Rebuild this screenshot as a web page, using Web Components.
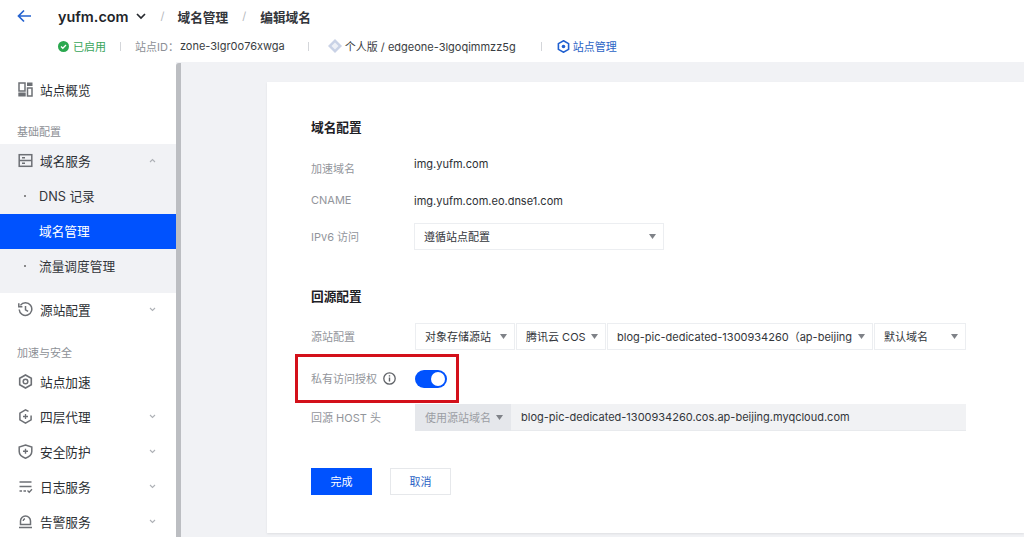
<!DOCTYPE html>
<html lang="zh">
<head>
<meta charset="utf-8">
<title>编辑域名</title>
<style>
html, body { margin: 0; height: 537px; overflow: hidden; background: #f1f2f5; }
body { font: 11px Inter, "Noto Sans CJK SC", sans-serif; color: #24272c; }
</style>
</head>
<body>

<eo-page>
	<eo-header slot="header"></eo-header>
	<eo-sidebar slot="side"></eo-sidebar>
	<eo-card slot="main">
		<eo-title>域名配置</eo-title>
		<eo-row label="加速域名" gap="12" labelshift="5" h="26">img.yufm.com</eo-row>
		<eo-row label="CNAME" gap="12" h="26">img.yufm.com.eo.dnse1.com</eo-row>
		<eo-row label="IPv6 访问" gap="9" h="27">
			<eo-select w="250">遵循站点配置</eo-select>
		</eo-row>
		<eo-title gap="37">回源配置</eo-title>
		<eo-row label="源站配置" gap="16" h="27">
			<eo-select w="100" style="margin-left:1px">对象存储源站</eo-select>
			<eo-select w="90" style="margin-left:1px">腾讯云 COS</eo-select>
			<eo-select w="266" clip style="margin-left:1px">blog-pic-dedicated-1300934260（ap-beijing）</eo-select>
			<eo-select w="92" style="margin-left:1px">默认域名</eo-select>
		</eo-row>
		<eo-row label="私有访问授权" info gap="16" h="26">
			<eo-toggle style="margin-left:1px"></eo-toggle>
		</eo-row>
		<eo-row label="回源 HOST 头" gap="12" h="27">
			<eo-select w="96" disabled style="margin-left:1px">使用源站域名</eo-select>
			<eo-input w="455">blog-pic-dedicated-1300934260.cos.ap-beijing.myqcloud.com</eo-input>
		</eo-row>
		<eo-actions>
			<eo-button primary>完成</eo-button>
			<eo-button>取消</eo-button>
		</eo-actions>
		<eo-mark></eo-mark>
	</eo-card>
</eo-page>

<script>
const FONT = `Inter, "Noto Sans CJK SC", sans-serif`

const ICONS = {
	overview: `<rect x="1" y="1" width="6" height="8" fill="none" stroke="currentColor" stroke-width="1.5"/><rect x="9" y=".5" width="5.500" height="3.500" fill="currentColor"/><rect x=".3" y="10.500" width="7.400" height="4" fill="currentColor"/><rect x="9.500" y="6" width="4.500" height="8" fill="none" stroke="currentColor" stroke-width="1.500"/>`,
	domain: `<rect x="1.200" y="1.700" width="12.600" height="11.600" fill="none" stroke="currentColor" stroke-width="1.500"/><path d="M1.200 7.500h12.600M4 4.700h3M4 10.300h3" fill="none" stroke="currentColor" stroke-width="1.500"/>`,
	origin: `<path d="M2.400 3.400A6.300 6.300 0 1 1 1.200 7.500" fill="none" stroke="currentColor" stroke-width="1.500"/><path d="M.8 1.200v3.500h3.600" fill="none" stroke="currentColor" stroke-width="1.500"/><path d="M7.500 4v3.800l2.600 1.600" fill="none" stroke="currentColor" stroke-width="1.500"/>`,
	speed: `<path d="M7.500 1 13.300 4.200v6.600L7.500 14 1.700 10.800V4.200z" fill="none" stroke="currentColor" stroke-width="1.600"/><circle cx="7.500" cy="7.500" r="2.300" fill="none" stroke="currentColor" stroke-width="1.500"/>`,
	layer4: `<path d="M10.500 2.400 7.500 .9 1.900 4.100v6.800l5.600 3.200 5.600-3.200V6.500" fill="none" stroke="currentColor" stroke-width="1.500"/><path d="M7.500 5v5M5 7.500h5" stroke="currentColor" stroke-width="1.300"/>`,
	shield: `<path d="M7.500 1 13.800 3v4.600c0 3.200-2.700 5.400-6.300 6.600C3.900 13 1.200 10.800 1.200 7.600V3z" fill="none" stroke="currentColor" stroke-width="1.500"/><path d="M7.500 4.800v5M5 7.300h5" stroke="currentColor" stroke-width="1.400"/>`,
	log: `<path d="M1.500 3h12M1.500 7.500h12M1.500 12h2.500M5.500 12h2.500" fill="none" stroke="currentColor" stroke-width="1.300"/><path d="M9.500 11.500l1.700 1.700 2.800-2.900" fill="none" stroke="currentColor" stroke-width="1.300"/>`,
	alarm: `<path d="M2.500 10.500V7a5 5 0 0 1 10 0v3.500z" fill="none" stroke="currentColor" stroke-width="1.500"/><path d="M1 13.500h13M5.200 7a2.400 2.400 0 0 1 1.800-2.200" fill="none" stroke="currentColor" stroke-width="1.400"/>`
}

class EoPage extends HTMLElement {
	constructor(){
		super()
		this.attachShadow({mode: 'open'}).innerHTML = `
			<style>
				:host{ display: flex; flex-direction: column; height: 537px; background: #f1f2f5; }
				.body{ flex: 1; display: flex; min-height: 0; }
				.bar{ width: 5px; background: #bcbec2; border-radius: 3px 0 0 0; margin-top: 1px; flex: none; }
				.main{ flex: 1; min-width: 0; padding: 20px 0 4px 86px; display: flex; }
			</style>
			<slot name="header"></slot>
			<div class="body">
				<slot name="side"></slot>
				<div class="bar"></div>
				<div class="main"><slot name="main"></slot></div>
			</div>`
	}
}

class EoHeader extends HTMLElement {
	constructor(){
		super()
		this.attachShadow({mode: 'open'}).innerHTML = `
			<style>
				:host{ display: block; flex: none; height: 62px; background: #fff; font-family: ${FONT}; }
				.top{ display: flex; align-items: center; height: 32px; padding-left: 17px; }
				.name{ font-size: 14.400px; font-weight: 600; margin-left: 26px; color: #22252a; }
				.crumb{ font-size: 12.700px; font-weight: bold; color: #33363b; }
				.slash{ color: #b5b8bd; font-size: 11px; }
				.sub{ display: flex; align-items: center; height: 28px; padding: 0 0 0 58px; font-size: 11px; color: #8d9096; }
				.ok{ color: #38a55a; margin-left: 4px; }
				.sep{ width: 1px; height: 9px; background: #d4d6da; }
				.dark{ color: #3a3d42; }
				.link{ color: #2a63c5; margin-left: 3px; }
			</style>
			<div class="top">
				<svg width="15" height="14" viewBox="0 0 15 14" fill="none" stroke="#2563d0" stroke-width="1.700"><path d="M14 7H1.500M7 1.500 1.500 7 7 12.500"/></svg>
				<span class="name">yufm.com</span>
				<svg style="margin-left:7px" width="10" height="7" viewBox="0 0 10 7" fill="none" stroke="#26292e" stroke-width="1.700"><path d="M1 1l4 4 4-4"/></svg>
				<span class="slash" style="margin-left:15px">/</span>
				<span class="crumb" style="margin-left:13px">域名管理</span>
				<span class="slash" style="margin-left:14px">/</span>
				<span class="crumb" style="margin-left:14px">编辑域名</span>
			</div>
			<div class="sub">
				<svg width="11" height="11" viewBox="0 0 11 11"><circle cx="5.500" cy="5.500" r="5.500" fill="#2aa84f"/><path d="M3 5.500l1.800 1.800L8 4" fill="none" stroke="#fff" stroke-width="1.300"/></svg>
				<span class="ok">已启用</span>
				<span class="sep" style="margin-left:14px"></span>
				<span style="margin-left:14px">站点ID：</span>
				<span class="dark" style="margin-left:1px">zone-3lgr0o76xwga</span>
				<span class="sep" style="margin-left:23px"></span>
				<svg style="margin-left:19px" width="14" height="14" viewBox="0 0 14 14"><path d="M7 0 14 7 7 14 0 7z" fill="#c9d2e6"/><path d="M7 3.500 10.500 7 7 10.500 3.500 7z" fill="#eef1f7"/></svg>
				<span class="dark" style="margin-left:3px">个人版 / edgeone-3lgoqimmzz5g</span>
				<span class="sep" style="margin-left:25px"></span>
				<svg style="margin-left:15px" width="13" height="13" viewBox="0 0 13 13"><path d="M6.500 .8 11.600 3.600v5.800L6.500 12.200 1.400 9.400V3.600z" fill="none" stroke="#1f5fd0" stroke-width="1.600"/><circle cx="6.500" cy="6.500" r="1.800" fill="#1f5fd0"/></svg>
				<span class="link">站点管理</span>
			</div>`
	}
}

class NavItem extends HTMLElement {
	constructor(){
		super()
		this.attachShadow({mode: 'open'})
	}
	connectedCallback(){
		const icon = this.getAttribute('icon')
		const arrow = this.getAttribute('arrow')
		const glyph = icon
			? `<svg class="ic" width="15" height="15" viewBox="0 0 15 15">${ICONS[icon]}</svg>`
			: (this.hasAttribute('plain') ? `` : `<i class="dot"></i>`)
		const chev = arrow
			? `<svg class="chev" width="7" height="5" viewBox="0 0 7 5" fill="none" stroke="#aeb1b6" stroke-width="1.100"><path d="${arrow === 'up' ? 'M1 4l2.500-2.500L6 4' : 'M1 1l2.500 2.500L6 1'}"/></svg>`
			: ``
		this.shadowRoot.innerHTML = `
			<style>
				:host{ display: flex; align-items: center; height: 35px; box-sizing: border-box; padding: 0 0 2px 18px; font-size: 12.700px; color: #2c2f34; font-family: ${FONT}; }
				:host([sub]){ padding-left: 39px; color: #33363b; }
				:host([active]){ background: #0052fe; color: #fff; }
				.ic{ color: #6d7075; margin-right: 7px; flex: none; }
				.dot{ width: 2px; height: 2px; background: #666; border-radius: 50%; margin-left: -15px; margin-right: 13px; flex: none; }
				.chev{ margin-left: auto; margin-right: 20px; flex: none; }
			</style>
			${glyph}<slot></slot>${chev}`
	}
}

class NavGroup extends HTMLElement {
	constructor(){
		super()
		this.attachShadow({mode: 'open'}).innerHTML = `
			<style>
				:host{ display: block; font-size: 11px; color: #8d9096; padding-left: 17px; line-height: 14px; }
			</style>
			<slot></slot>`
	}
}

class EoSidebar extends HTMLElement {
	constructor(){
		super()
		this.attachShadow({mode: 'open'}).innerHTML = `
			<style>
				:host{ display: block; width: 176px; flex: none; background: #fff; overflow: hidden; padding-top: 10px; box-sizing: border-box; }
				.open{ background: #f1f2f5; padding-bottom: 9px; }
			</style>
			<nav-item icon="overview" style="padding-bottom:0">站点概览</nav-item>
			<nav-group style="margin-top:18px">基础配置</nav-group>
			<div class="open" style="margin-top:5px">
				<nav-item icon="domain" arrow="up">域名服务</nav-item>
				<nav-item sub>DNS 记录</nav-item>
				<nav-item sub plain active>域名管理</nav-item>
				<nav-item sub>流量调度管理</nav-item>
			</div>
			<nav-item icon="origin" arrow="down">源站配置</nav-item>
			<nav-group style="margin-top:18px">加速与安全</nav-group>
			<nav-item icon="speed" style="margin-top:5px">站点加速</nav-item>
			<nav-item icon="layer4" arrow="down">四层代理</nav-item>
			<nav-item icon="shield" arrow="down">安全防护</nav-item>
			<nav-item icon="log" arrow="down">日志服务</nav-item>
			<nav-item icon="alarm" arrow="down">告警服务</nav-item>`
	}
}

class EoCard extends HTMLElement {
	constructor(){
		super()
		this.attachShadow({mode: 'open'}).innerHTML = `
			<style>
				:host{ display: block; flex: 1; position: relative; background: #fff; padding: 36px 0 0 44px; box-sizing: border-box; box-shadow: 0 1px 2px rgba(0,0,0,.08); font-family: ${FONT}; }
			</style>
			<slot></slot>`
	}
}

class EoTitle extends HTMLElement {
	constructor(){
		super()
		this.attachShadow({mode: 'open'}).innerHTML = `
			<style>
				:host{ display: block; height: 20px; line-height: 20px; font-size: 12.700px; font-weight: bold; color: #1d2025; }
			</style>
			<slot></slot>`
	}
	connectedCallback(){
		if (this.hasAttribute('gap')) this.style.marginTop = this.getAttribute('gap') + 'px'
	}
}

class EoRow extends HTMLElement {
	constructor(){
		super()
		this.attachShadow({mode: 'open'})
	}
	connectedCallback(){
		const gap = this.getAttribute('gap') || 0
		const h = this.getAttribute('h') || 27
		const shift = this.getAttribute('labelshift') || 0
		const info = this.hasAttribute('info')
			? `<svg style="margin-left:6px" width="13" height="13" viewBox="0 0 13 13"><circle cx="6.500" cy="6.500" r="5.700" fill="none" stroke="#5f6267" stroke-width="1.300"/><path d="M6.500 5.500v4M6.500 3.200v1.300" stroke="#5f6267" stroke-width="1.400"/></svg>`
			: ``
		this.shadowRoot.innerHTML = `
			<style>
				:host{ display: grid; grid-template-columns: 103px 1fr; align-items: center; margin-top: ${gap}px; height: ${h}px; font-size: 11px; color: #2c2f34; }
				.label{ display: flex; align-items: center; color: #92959b; padding-top: ${shift * 2}px; padding-bottom: 2px; }
				.value{ display: flex; align-items: center; }
			</style>
			<div class="label">${this.getAttribute('label')}${info}</div>
			<div class="value"><slot></slot></div>`
	}
}

class EoSelect extends HTMLElement {
	constructor(){
		super()
		this.attachShadow({mode: 'open'})
	}
	connectedCallback(){
		const w = this.getAttribute('w')
		this.shadowRoot.innerHTML = `
			<style>
				:host{ display: flex; align-items: center; width: ${w}px; height: 27px; box-sizing: border-box; padding: 0 7px 2px 9px; background: #fff; border: 1px solid #eceef1; font-size: 11px; color: #33363b; flex: none; }
				:host([disabled]){ background: #e5e7eb; border-color: #e5e7eb; color: #9b9ea4; }
				.t{ flex: 1; min-width: 0; overflow: hidden; white-space: nowrap; }
				svg{ flex: none; margin-left: 3px; margin-top: 1px; }
				:host([clip]) svg{ margin-left: 6px; }
			</style>
			<span class="t"><slot></slot></span>
			<svg width="7" height="5" viewBox="0 0 7 5"><path d="M0 0h7L3.500 5z" fill="#7f8288"/></svg>`
	}
}

class EoInput extends HTMLElement {
	constructor(){
		super()
		this.attachShadow({mode: 'open'})
	}
	connectedCallback(){
		this.shadowRoot.innerHTML = `
			<style>
				:host{ display: flex; align-items: center; width: ${this.getAttribute('w')}px; height: 27px; padding: 0 0 1px 10px; box-sizing: border-box; background: #f1f2f4; border-bottom: 1px solid #e8eaed; font-size: 11px; color: #33363b; flex: none; white-space: nowrap; }
			</style>
			<slot></slot>`
	}
}

class EoToggle extends HTMLElement {
	constructor(){
		super()
		this.attachShadow({mode: 'open'}).innerHTML = `
			<style>
				:host{ display: flex; align-items: center; justify-content: flex-end; width: 32px; height: 18px; box-sizing: border-box; padding-right: 2px; border-radius: 9px; background: #0052fe; }
				i{ width: 14px; height: 14px; border-radius: 50%; background: #fff; }
			</style>
			<i></i>`
	}
}

class EoActions extends HTMLElement {
	constructor(){
		super()
		this.attachShadow({mode: 'open'}).innerHTML = `
			<style>
				:host{ display: flex; gap: 18px; margin-top: 37px; }
			</style>
			<slot></slot>`
	}
}

class EoButton extends HTMLElement {
	constructor(){
		super()
		this.attachShadow({mode: 'open'}).innerHTML = `
			<style>
				:host{ display: flex; align-items: center; justify-content: center; width: 61px; height: 27px; box-sizing: border-box; border: 1px solid #e6e8eb; background: #fff; color: #2a63c5; font-size: 11px; padding-bottom: 1px; }
				:host([primary]){ background: #0052fe; border-color: #0052fe; color: #fff; }
			</style>
			<slot></slot>`
	}
}

class EoMark extends HTMLElement {
	constructor(){
		super()
		this.attachShadow({mode: 'open'}).innerHTML = `
			<style>
				:host{ position: absolute; left: 28px; top: 272px; width: 164px; height: 49px; box-sizing: border-box; border: 3px solid #d3101a; pointer-events: none; }
			</style>`
	}
}

customElements.define('nav-item', NavItem)
customElements.define('nav-group', NavGroup)
customElements.define('eo-sidebar', EoSidebar)
customElements.define('eo-header', EoHeader)
customElements.define('eo-page', EoPage)
customElements.define('eo-card', EoCard)
customElements.define('eo-title', EoTitle)
customElements.define('eo-row', EoRow)
customElements.define('eo-select', EoSelect)
customElements.define('eo-input', EoInput)
customElements.define('eo-toggle', EoToggle)
customElements.define('eo-actions', EoActions)
customElements.define('eo-button', EoButton)
customElements.define('eo-mark', EoMark)
</script>
</body>
</html>
